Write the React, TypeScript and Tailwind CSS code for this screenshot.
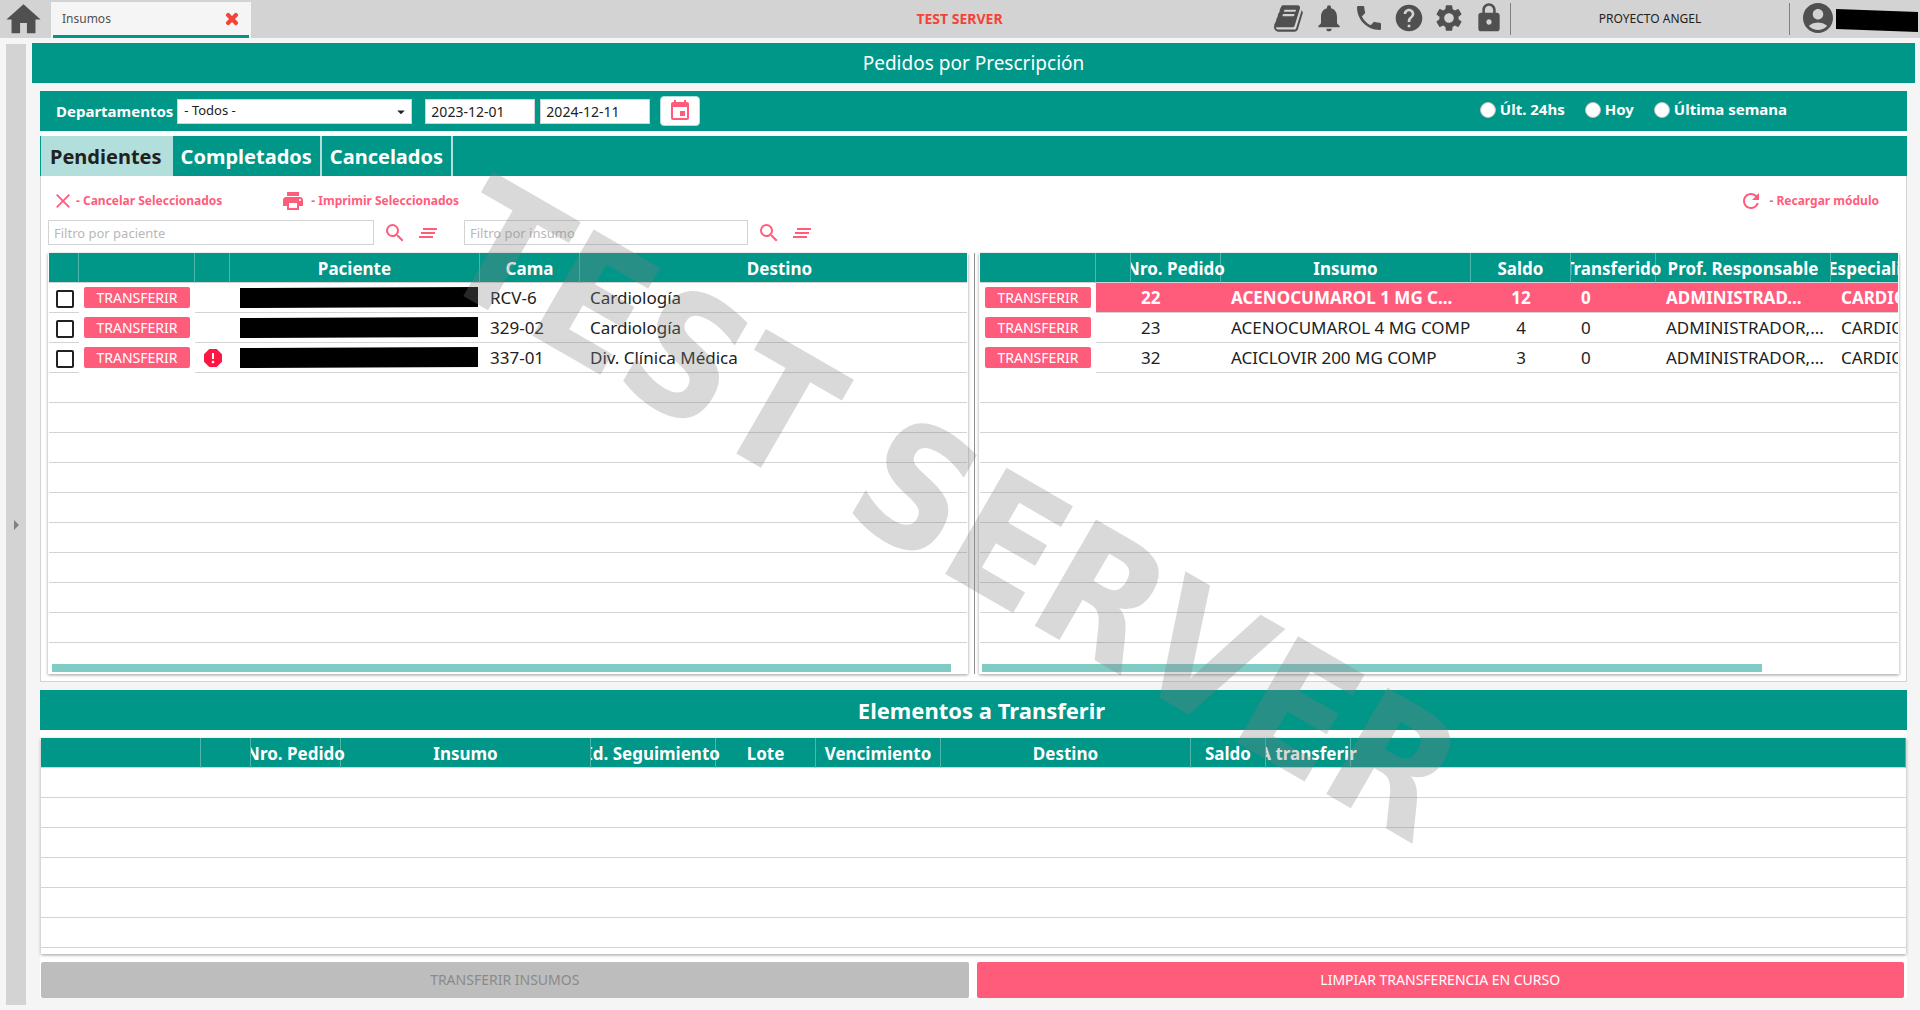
import { useState } from "react";
import type { ReactNode } from "react";
import {
  MdAccountCircle,
  MdArrowDropDown,
  MdArrowRight,
  MdClearAll,
  MdEvent,
  MdHelp,
  MdHome,
  MdLock,
  MdNotifications,
  MdPhone,
  MdPrint,
  MdRefresh,
  MdReport,
  MdSearch,
  MdSettings,
} from "react-icons/md";
import { FaTimes } from "react-icons/fa";

type Column = {
  title: string;
  width?: number;
};

const patientColumns: Column[] = [
  { title: "", width: 30 },
  { title: "", width: 116 },
  { title: "", width: 35 },
  { title: "Paciente", width: 250 },
  { title: "Cama", width: 100 },
  { title: "Destino", width: 400 },
];

const orderColumns: Column[] = [
  { title: "", width: 116 },
  { title: "", width: 35 },
  { title: "Nro. Pedido", width: 90 },
  { title: "Insumo", width: 250 },
  { title: "Saldo", width: 100 },
  { title: "Transferido", width: 85 },
  { title: "Prof. Responsable", width: 175 },
  { title: "Especialidad", width: 100 },
];

const transferColumns: Column[] = [
  { title: "", width: 160 },
  { title: "", width: 50 },
  { title: "Nro. Pedido", width: 90 },
  { title: "Insumo", width: 250 },
  { title: "Id. Seguimiento", width: 125 },
  { title: "Lote", width: 100 },
  { title: "Vencimiento", width: 125 },
  { title: "Destino", width: 250 },
  { title: "Saldo", width: 75 },
  { title: "A transferir", width: 85 },
  { title: "" },
];

const patients = [
  { id: 1, bed: "RCV-6", destination: "Cardiología", alert: false },
  { id: 2, bed: "329-02", destination: "Cardiología", alert: false },
  { id: 3, bed: "337-01", destination: "Div. Clínica Médica", alert: true },
];

const orders = [
  {
    id: 22,
    item: "ACENOCUMAROL 1 MG C...",
    balance: 12,
    transferred: 0,
    professional: "ADMINISTRAD...",
    specialty: "CARDIOLOGÍA",
  },
  {
    id: 23,
    item: "ACENOCUMAROL 4 MG COMP",
    balance: 4,
    transferred: 0,
    professional: "ADMINISTRADOR,...",
    specialty: "CARDIOLOGÍA",
  },
  {
    id: 32,
    item: "ACICLOVIR 200 MG COMP",
    balance: 3,
    transferred: 0,
    professional: "ADMINISTRADOR,...",
    specialty: "CARDIOLOGÍA",
  },
];

const tabs = ["Pendientes", "Completados", "Cancelados"];

const ranges = ["Últ. 24hs", "Hoy", "Última semana"];

const BookIcon = () => (
  <svg viewBox="0 0 1792 1792" className="size-[31px]" fill="currentColor">
    <path d="M1639 478q40 57 18 129l-275 906q-19 64-76.5 107.5t-122.5 43.5h-923q-77 0-148.5-53.5t-99.5-131.5q-24-67-2-127 0-4 3-27t4-37q1-8-3-21.5t-3-19.5q2-11 8-21t16.5-23.5 16.5-23.5q23-38 45-91.5t30-91.5q3-10 .5-30t-.5-28q3-11 17-28t17-23q21-36 42-92t25-90q1-9-2.5-32t.5-28q4-13 22-30.5t22-22.5q19-26 42.5-84.5t27.5-96.5q1-8-3-25.5t-2-26.5q2-8 9-18t18-23 17-21q8-12 16.5-30.5t15-35 16-36 19.5-32 26.5-23.5 36-11.5 47.5 5.5l-1 3q38-9 51-9h761q74 0 114 56t18 130l-274 906q-36 119-71.5 153.5t-128.5 34.5h-869q-27 0-38 15-11 16-1 43 24 70 144 70h923q29 0 56-15.5t35-41.5l300-987q7-22 5-57 38 15 59 43zm-1064 2q-4 13 2 22.5t20 9.5h608q13 0 25.5-9.5t16.5-22.5l21-64q4-13-2-22.5t-20-9.5h-608q-13 0-25.5 9.5t-16.5 22.5zm-83 256q-4 13 2 22.5t20 9.5h608q13 0 25.5-9.5t16.5-22.5l21-64q4-13-2-22.5t-20-9.5h-608q-13 0-25.5 9.5t-16.5 22.5z" />
  </svg>
);

const CrossIcon = () => (
  <svg
    viewBox="0 0 14 14"
    className="size-[14px]"
    fill="none"
    stroke="currentColor"
    strokeWidth="1.8"
  >
    <path d="M.7.7l12.6 12.6M13.3.7L.7 13.3" />
  </svg>
);

const IconButton = ({ label, children }: { label: string; children: ReactNode }) => (
  <button type="button" aria-label={label} className="flex cursor-pointer items-center justify-center">
    {children}
  </button>
);

const TransferButton = () => (
  <button
    type="button"
    className="mx-auto block h-[21px] w-[106px] cursor-pointer rounded-[2px] bg-[#ff5c7c] text-[14px] leading-[21px] text-white"
  >
    TRANSFERIR
  </button>
);

const Grid = ({
  columns,
  emptyRows,
  label,
  children,
}: {
  columns: Column[];
  emptyRows: number;
  label: string;
  children?: ReactNode;
}) => (
  <table
    aria-label={label}
    className="w-full table-fixed border-separate border-spacing-0 text-[17px] leading-[20px] text-[#212121]"
  >
    <colgroup>
      {columns.map((column, i) => (
        <col key={i} style={{ width: column.width }} />
      ))}
    </colgroup>
    <thead>
      <tr className="h-[30px] bg-[#009688] text-white">
        {columns.map((column, i) => (
          <th
            key={i}
            className="border-r border-b border-r-white/30 border-b-[#d3d3d3] p-0 pt-[2px] font-bold [clip-path:inset(0_-12px_0_0)]"
          >
            <div className="flex justify-center whitespace-nowrap">{column.title}</div>
          </th>
        ))}
      </tr>
    </thead>
    <tbody>
      {children}
      {Array.from({ length: emptyRows }, (_, i) => (
        <tr key={i} className="h-[30px]">
          <td colSpan={columns.length} className="border-b border-[#d3d3d3] p-0" />
        </tr>
      ))}
    </tbody>
  </table>
);

const cell = "whitespace-nowrap border-b border-[#d3d3d3] py-0 pr-0 pl-[10px]";

const App = () => {
  const [activeTab, setActiveTab] = useState("Pendientes");
  const [selectedOrder, setSelectedOrder] = useState(22);

  return (
    <div className="relative flex min-h-screen flex-col overflow-hidden bg-[#f5f5f5] font-['Noto_Sans',sans-serif] text-[#212121]">
      <header className="flex h-[38px] items-center bg-[#d3d3d3] text-[#505050]">
        <a href="#" aria-label="Inicio" className="ml-[3px] block">
          <MdHome className="size-[41px]" />
        </a>
        <div className="mt-[2px] ml-[7px] flex h-9 w-[200px] flex-col bg-[#f5f5f5] px-[2px]">
          <div className="flex flex-1 items-center justify-between px-[9px]">
            <span className="text-[12px]">Insumos</span>
            <button type="button" aria-label="Cerrar pestaña" className="cursor-pointer text-[#f44336]">
              <FaTimes className="size-4" stroke="currentColor" strokeWidth="40" />
            </button>
          </div>
          <div className="h-[3px] bg-[#009688]" />
        </div>
        <div className="flex-1 pb-[2px] pl-[394px] text-center text-[14px] font-bold text-[#f44336]">
          TEST SERVER
        </div>
        <div className="flex items-center gap-[8px] pb-[2px]">
          <IconButton label="Manual"><BookIcon /></IconButton>
          <IconButton label="Notificaciones"><MdNotifications className="size-8" /></IconButton>
          <IconButton label="Teléfono"><MdPhone className="size-8" /></IconButton>
          <IconButton label="Ayuda"><MdHelp className="size-8" /></IconButton>
          <IconButton label="Configuración"><MdSettings className="size-8" /></IconButton>
          <IconButton label="Bloquear"><MdLock className="size-8" /></IconButton>
        </div>
        <div className="mr-1 ml-[5px] flex h-8 w-[280px] items-center justify-center border-x border-[#808080] text-[12px] text-[#212121]">
          PROYECTO ANGEL
        </div>
        <div className="flex w-[126px] items-center pr-[2px] pb-[2px] pl-[6px]">
          <MdAccountCircle className="size-9 shrink-0" />
          <svg viewBox="0 0 84 24" className="mt-1 h-6 flex-1" preserveAspectRatio="none">
            <path d="M0 1l84 3v20L0 21z" fill="#000" />
          </svg>
        </div>
      </header>

      <div className="flex flex-1">
        <aside className="mt-[6px] mb-[5px] ml-[6px] flex w-5 items-center justify-center bg-[#d3d3d3]">
          <button type="button" aria-label="Expandir menú" className="cursor-pointer text-[#808080]">
            <MdArrowRight className="-mx-1 size-6" />
          </button>
        </aside>

        <main className="mt-[5px] mr-[5px] mb-3 ml-[6px] min-w-0 flex-1">
          <h1 className="bg-[#009688] pt-px text-center text-[19px] leading-[39px] text-white">
            Pedidos por Prescripción
          </h1>

          <div className="mx-2 mt-2">
            <section className="bg-white">
              <div className="flex h-10 items-center bg-[#009688] pr-[120px] pl-4 text-[15px] font-bold text-white">
                <label htmlFor="department">Departamentos</label>
                <div className="relative ml-1">
                  <select
                    id="department"
                    className="block h-[25px] w-[235px] appearance-none border border-[#d3d3d3] bg-white pl-[6px] text-[13px] font-normal text-[#212121]"
                  >
                    <option>- Todos -</option>
                  </select>
                  <MdArrowDropDown className="pointer-events-none absolute top-1 right-[2px] size-[18px] text-[#212121]" />
                </div>
                <input
                  aria-label="Fecha desde"
                  defaultValue="2023-12-01"
                  className="ml-[13px] h-[25px] w-[110px] border border-[#d3d3d3] bg-white pl-[5px] text-[14px] font-normal text-[#212121]"
                />
                <input
                  aria-label="Fecha hasta"
                  defaultValue="2024-12-11"
                  className="ml-[5px] h-[25px] w-[110px] border border-[#d3d3d3] bg-white pl-[5px] text-[14px] font-normal text-[#212121]"
                />
                <button
                  type="button"
                  aria-label="Calendario"
                  className="ml-[10px] flex h-[30px] w-10 cursor-pointer items-center justify-center rounded-[4px] border border-[#b2dfdb] bg-white text-[#ff5c7c]"
                >
                  <MdEvent className="size-6" />
                </button>
                <div className="ml-auto flex gap-5 pb-[3px]">
                  {ranges.map((range) => (
                    <label key={range} className="flex items-center gap-[4px]">
                      <input
                        type="radio"
                        name="range"
                        className="size-4 appearance-none rounded-full border border-[#c0c0c0] bg-white checked:border-4 checked:border-[#ff5c7c]"
                      />
                      {range}
                    </label>
                  ))}
                </div>
              </div>

              <div role="tablist" className="mt-[5px] flex h-10 bg-[#009688] pl-px text-[20px] font-bold">
                {tabs.map((tab) => (
                  <button
                    key={tab}
                    type="button"
                    role="tab"
                    aria-selected={tab === activeTab}
                    onClick={() => setActiveTab(tab)}
                    className={
                      tab === activeTab
                        ? "cursor-pointer border-r-2 border-[#b2dfdb] bg-[#b2dfdb] px-[9px] pt-[2px] text-[#212121]"
                        : "cursor-pointer border-r-2 border-[#b2dfdb] px-2 pt-[2px] text-white"
                    }
                  >
                    {tab}
                  </button>
                ))}
              </div>

              <div className="border border-t-0 border-[#d3d3d3] px-[7px] pb-[7px]">
                <div className="flex h-11 items-center pt-[6px] pr-5 pl-2 text-[12px] font-bold text-[#ff5c7c]">
                  <button type="button" className="flex cursor-pointer items-center gap-[6px]">
                    <CrossIcon />
                    - Cancelar Seleccionados
                  </button>
                  <button type="button" className="ml-[59px] flex cursor-pointer items-center gap-[6px]">
                    <MdPrint className="size-6" />
                    - Imprimir Seleccionados
                  </button>
                  <button type="button" className="ml-auto flex cursor-pointer items-center gap-[6px]">
                    <MdRefresh className="size-6" />
                    - Recargar módulo
                  </button>
                </div>

                <div className="flex items-center gap-[9px] text-[#ff5c7c]">
                  <input
                    aria-label="Filtro por paciente"
                    placeholder="Filtro por paciente"
                    className="h-[25px] w-[326px] border border-[#d3d3d3] bg-white pl-[5px] text-[13px] text-[#212121] placeholder:text-[#b8b8b8]"
                  />
                  <IconButton label="Buscar paciente"><MdSearch className="size-6" /></IconButton>
                  <IconButton label="Limpiar filtro de paciente"><MdClearAll className="size-6" /></IconButton>
                  <input
                    aria-label="Filtro por insumo"
                    placeholder="Filtro por insumo"
                    className="ml-[15px] h-[25px] w-[284px] border border-[#d3d3d3] bg-white pl-[5px] text-[13px] text-[#212121] placeholder:text-[#b8b8b8]"
                  />
                  <IconButton label="Buscar insumo"><MdSearch className="size-6" /></IconButton>
                  <IconButton label="Limpiar filtro de insumo"><MdClearAll className="size-6" /></IconButton>
                </div>

                <div className="mt-2 flex">
                  <div className="min-w-0 flex-1 overflow-hidden px-px shadow-[0_1px_3px_rgba(0,0,0,0.4)]">
                    <div className="overflow-hidden">
                      <div className="w-[931px]">
                        <Grid columns={patientColumns} emptyRows={9} label="Pacientes">
                          {patients.map((patient) => (
                            <tr key={patient.id} className="h-[30px]">
                              <td className="border-b border-[#d3d3d3] p-0">
                                <input
                                  type="checkbox"
                                  aria-label={`Seleccionar cama ${patient.bed}`}
                                  className="mt-[3px] ml-[7px] block size-[18px] appearance-none rounded-[2px] border-2 border-[#212121] bg-white checked:bg-[#ff5c7c]"
                                />
                              </td>
                              <td className="p-0 pb-px"><TransferButton /></td>
                              <td className="border-b border-[#d3d3d3] p-0">
                                {patient.alert && <MdReport className="ml-[6px] size-6 text-[#ff1744]" />}
                              </td>
                              <td className={cell}>
                                <svg viewBox="0 0 238 21" className="h-[21px] w-[238px]">
                                  <path d="M0 1L238 0v20L0 21z" fill="#000" />
                                </svg>
                              </td>
                              <td className={cell}>{patient.bed}</td>
                              <td className={cell}>{patient.destination}</td>
                            </tr>
                          ))}
                        </Grid>
                      </div>
                    </div>
                    <div className="mt-[21px] mr-4 mb-[2px] ml-[3px] h-2 bg-[#80cbc4]" />
                  </div>

                  <div className="mr-1 ml-[6px] w-px bg-[#909090]" />

                  <div className="min-w-0 flex-1 overflow-hidden px-px shadow-[0_1px_3px_rgba(0,0,0,0.4)]">
                    <div className="overflow-hidden">
                      <div className="w-[951px]">
                        <Grid columns={orderColumns} emptyRows={9} label="Pedidos">
                          {orders.map((order) => (
                            <tr
                              key={order.id}
                              onClick={() => setSelectedOrder(order.id)}
                              className={
                                order.id === selectedOrder
                                  ? "h-[30px] font-bold text-white [&>td:not(:first-child)]:bg-[#ff5c7c]"
                                  : "h-[30px]"
                              }
                            >
                              <td className="p-0 pb-px font-normal"><TransferButton /></td>
                              <td className={cell} />
                              <td className={cell}>{order.id}</td>
                              <td className={cell}>{order.item}</td>
                              <td className="border-b border-[#d3d3d3] p-0 text-center">{order.balance}</td>
                              <td className={cell}>{order.transferred}</td>
                              <td className={cell}>{order.professional}</td>
                              <td className={cell}>{order.specialty}</td>
                            </tr>
                          ))}
                        </Grid>
                      </div>
                    </div>
                    <div className="mt-[21px] mb-[2px] ml-[2px] h-2 w-[85%] bg-[#80cbc4]" />
                  </div>
                </div>
              </div>
            </section>

            <section className="mt-2 bg-white">
              <h2 className="bg-[#009688] pl-4 text-center text-[22px] leading-[40px] font-bold text-white">
                Elementos a Transferir
              </h2>
              <div className="mx-px mt-2 overflow-hidden pb-[6px] shadow-[0_1px_3px_rgba(0,0,0,0.4)]">
                <Grid columns={transferColumns} emptyRows={6} label="Elementos a transferir" />
              </div>
              <div className="mt-2 mr-[3px] ml-px flex gap-2 text-[14px]">
                <button type="button" disabled className="h-9 flex-1 rounded-[2px] bg-[#bdbdbd] pb-px text-[#8a8a8a]">
                  TRANSFERIR INSUMOS
                </button>
                <button type="button" className="h-9 flex-1 cursor-pointer rounded-[2px] bg-[#ff5c7c] pb-px text-white">
                  LIMPIAR TRANSFERENCIA EN CURSO
                </button>
              </div>
            </section>
          </div>
        </main>
      </div>

      <div className="pointer-events-none absolute inset-0 flex items-center justify-center pt-3 pr-4">
        <span className="rotate-30 font-['DejaVu_Sans_Condensed','DejaVu_Sans',sans-serif] text-[168px] leading-none font-bold whitespace-nowrap text-[#808080]/30">
          TEST SERVER
        </span>
      </div>
    </div>
  );
};

export default App;
